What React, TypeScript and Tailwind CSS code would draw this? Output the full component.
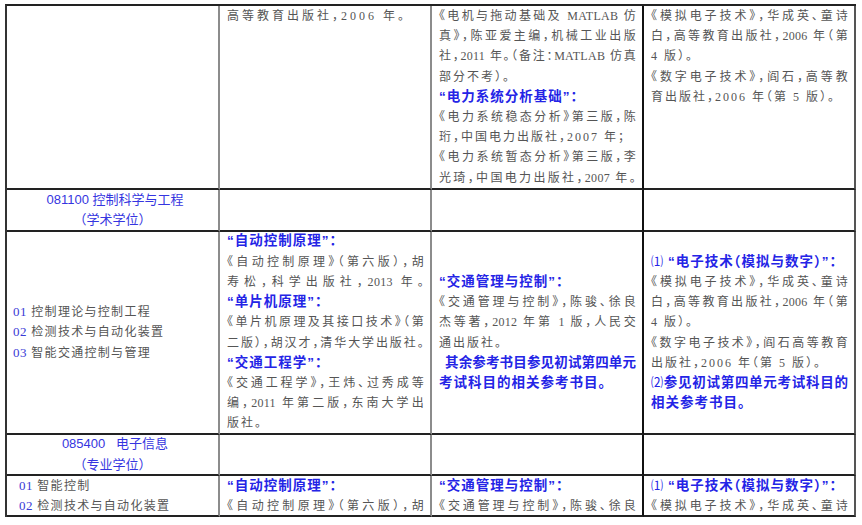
type L = { t: string; h?: boolean; f?: boolean; pre?: string; wide?: boolean; ind?: boolean };

const BODY =
  "font-['Liberation_Serif','Noto_Sans_CJK_SC',serif] text-[12px] text-[#555] [font-feature-settings:'halt']";
const HEAD =
  "font-['Liberation_Sans','Noto_Sans_CJK_SC',sans-serif] font-bold text-[13.5px] text-[#2424e6] [font-feature-settings:'halt']";
const JUSTIFY = "text-justify [text-align-last:justify]";

function Line({ l }: { l: L }) {
  const kind = l.h ? HEAD : BODY;
  const spacing = l.f
    ? (l.h ? "tracking-[0px] " : "tracking-[0.3px] ") + JUSTIFY
    : l.wide
      ? "tracking-[3px]"
      : l.h
        ? "tracking-[1px]"
        : "tracking-[2px]";
  return (
    <div className={`leading-[20.2px] ${kind} ${spacing} ${l.ind ? "pl-[6px]" : ""}`}>
      {l.pre && (
        <span className={`font-normal text-[12px] text-[#2424e6] ${l.pre === "⑴" ? "mr-[4px]" : ""}`}>{l.pre}</span>
      )}
      {l.t}
    </div>
  );
}

function Cell({ lines, col, top }: { lines: L[]; col: number; top?: boolean }) {
  const right = ["border-r-[#8c8c8c]", "border-r-[#8c8c8c]", "border-r-[#111]", "border-r-[#555]"][col];
  return (
    <div
      className={`border-b-2 border-b-[#222] border-r-2 ${right} pl-[7px] pr-[6px] flex flex-col overflow-hidden ${
        top ? "justify-start" : "justify-center"
      }`}
    >
      {lines.map((l, i) => (
        <Line key={i} l={l} />
      ))}
    </div>
  );
}

function Major({ code, name, kind }: { code: string; name: string; kind: string }) {
  return (
    <div className="border-b-2 border-b-[#222] border-r-2 border-r-[#8c8c8c] flex flex-col justify-center items-center font-['Liberation_Sans','Noto_Sans_CJK_SC',sans-serif] text-[13px] leading-[20.2px] text-[#3535e0]">
      <div className="pl-[5px]">
        {code}
        {name}
      </div>
      <div>{kind}</div>
    </div>
  );
}

function Directions({ items, indent }: { items: [string, string][]; indent: string }) {
  return (
    <div
      className={`border-b-2 border-b-[#222] border-r-2 border-r-[#8c8c8c] ${indent} flex flex-col overflow-hidden ${
        items.length > 2 ? "justify-center" : "justify-start"
      }`}
    >
      {items.map(([n, t]) => (
        <div
          key={n}
          className="leading-[20.2px] text-[12px] tracking-[1.3px] font-['Liberation_Serif','Noto_Sans_CJK_SC',serif] text-[#555]"
        >
          <span className="text-[#3a3ad6] text-[13px] tracking-[0.5px]">{n}</span> {t}
        </div>
      ))}
    </div>
  );
}

function Empty({ col }: { col: number }) {
  return <Cell lines={[]} col={col} />;
}

const r1c3: L[] = [
  { t: "《电机与拖动基础及 MATLAB 仿", f: true },
  { t: "真》，陈亚爱主编，机械工业出版", f: true },
  { t: "社，2011 年。（备注：MATLAB 仿真", f: true },
  { t: "部分不考）。" },
  { t: "“电力系统分析基础”：", h: true },
  { t: "《电力系统稳态分析》第三版，陈", f: true },
  { t: "珩，中国电力出版社，2007 年；" },
  { t: "《电力系统暂态分析》第三版，李", f: true },
  { t: "光琦，中国电力出版社，2007 年。", f: true },
];

const r1c4: L[] = [
  { t: "《模拟电子技术》，华成英、童诗", f: true },
  { t: "白，高等教育出版社，2006 年（第", f: true },
  { t: "4 版）。" },
  { t: "《数字电子技术》，阎石，高等教", f: true },
  { t: "育出版社，2006 年（第 5 版）。" },
];

const r3c2: L[] = [
  { t: "“自动控制原理”：", h: true },
  { t: "《自动控制原理》（第六版），胡", f: true },
  { t: "寿松，科学出版社，2013 年。", f: true },
  { t: "“单片机原理”：", h: true },
  { t: "《单片机原理及其接口技术》（第", f: true },
  { t: "二版），胡汉才，清华大学出版社。", f: true },
  { t: "“交通工程学”：", h: true },
  { t: "《交通工程学》，王炜、过秀成等", f: true },
  { t: "编，2011 年第二版，东南大学出", f: true },
  { t: "版社。" },
];

const r3c3: L[] = [
  { t: "“交通管理与控制”：", h: true },
  { t: "《交通管理与控制》，陈骏、徐良", f: true },
  { t: "杰等著，2012 年第 1 版，人民交", f: true },
  { t: "通出版社。" },
  { t: "其余参考书目参见初试第四单元", h: true, f: true, ind: true },
  { t: "考试科目的相关参考书目。", h: true },
];

const r3c4: L[] = [
  { t: "“电子技术（模拟与数字）”：", h: true, pre: "⑴" },
  { t: "《模拟电子技术》，华成英、童诗", f: true },
  { t: "白，高等教育出版社，2006 年（第", f: true },
  { t: "4 版）。" },
  { t: "《数字电子技术》，阎石高等教育", f: true },
  { t: "出版社，2006 年（第 5 版）。" },
  { t: "参见初试第四单元考试科目的", h: true, f: true, pre: "⑵" },
  { t: "相关参考书目。", h: true },
];

export default function App() {
  return (
    <div className="w-[862px] h-[525px] bg-white overflow-hidden">
      <div className="ml-[5px] mt-[4px] w-[851px] border-l-2 border-t-2 border-l-[#333] border-t-[#222] grid grid-cols-[213px_212px_212px_212px] grid-rows-[184px_42px_203px_41px_41px]">
        {/* continued row from the previous page */}
        <Empty col={0} />
        <Cell col={1} top lines={[{ t: "高等教育出版社，2006 年。", wide: true }]} />
        <Cell col={2} top lines={r1c3} />
        <Cell col={3} top lines={r1c4} />

        <Major code="081100 " name="控制科学与工程" kind="（学术学位）" />
        <Empty col={1} />
        <Empty col={2} />
        <Empty col={3} />

        <Directions
          indent="pl-[6px]"
          items={[
            ["01", "控制理论与控制工程"],
            ["02", "检测技术与自动化装置"],
            ["03", "智能交通控制与管理"],
          ]}
        />
        <Cell col={1} lines={r3c2} />
        <Cell col={2} lines={r3c3} />
        <Cell col={3} lines={r3c4} />

        <Major code={"085400\u00a0\u00a0\u00a0"} name="电子信息" kind="（专业学位）" />
        <Empty col={1} />
        <Empty col={2} />
        <Empty col={3} />

        <Directions
          indent="pl-[12px]"
          items={[
            ["01", "智能控制"],
            ["02", "检测技术与自动化装置"],
          ]}
        />
        <Cell col={1} top lines={r3c2.slice(0, 2)} />
        <Cell col={2} top lines={r3c3.slice(0, 2)} />
        <Cell col={3} top lines={r3c4.slice(0, 2)} />
      </div>
    </div>
  );
}
